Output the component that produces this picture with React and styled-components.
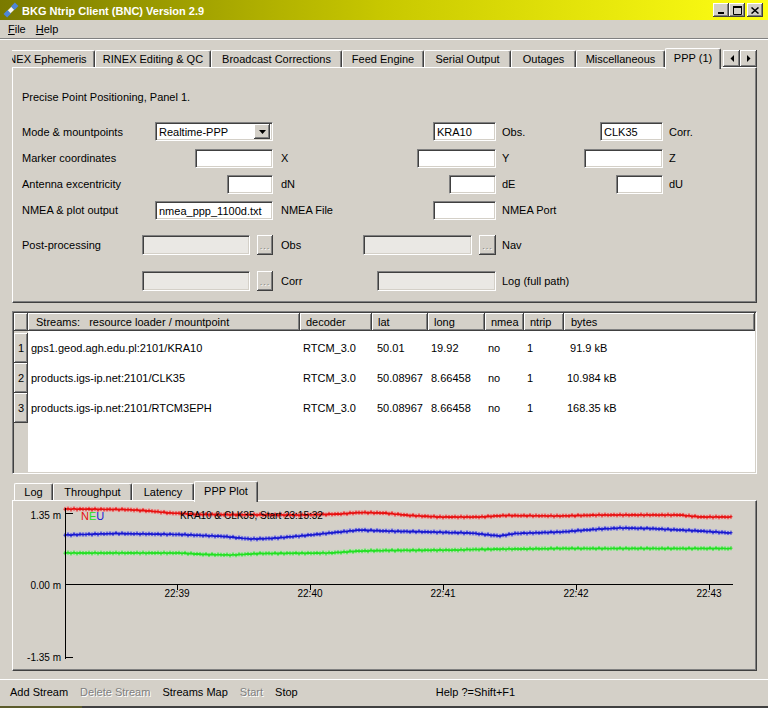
import React from 'react'
import styled, { createGlobalStyle } from 'styled-components'

const GlobalStyle = createGlobalStyle`
  html, body {
    margin: 0;
    padding: 0;
    background: #d4d0c8;
  }
  body {
    font-family: 'Liberation Sans', Arial, sans-serif;
    font-size: 11px;
    color: #000;
  }
`

const raised = `
  box-shadow: inset -1px -1px #404040, inset 1px 1px #fff, inset -2px -2px #808080;
`

const Window = styled.div`
  width: 768px;
  height: 708px;
  background: #d4d0c8;
  display: flex;
  flex-direction: column;
  overflow: hidden;
`

const TitleBar = styled.div`
  height: 20px;
  flex: none;
  display: flex;
  align-items: center;
  padding: 0 5px 0 3px;
  background: linear-gradient(to right, #7a7a00, #c8c800 50%, #ffff14);
  color: #fff;
  font-weight: bold;
  font-size: 11px;
  gap: 3px;
`

const TitleText = styled.span`
  flex: 1;
  padding-top: 1px;
`

const WinButtons = styled.div`
  display: flex;
  align-items: center;
`

const WinButton = styled.div`
  width: 16px;
  height: 14px;
  background: #d4d0c8;
  ${raised}
  display: flex;
  align-items: center;
  justify-content: center;
  margin-left: ${({ $gap }) => $gap || 0}px;
`

const MenuBar = styled.div`
  height: 18px;
  flex: none;
  display: flex;
  align-items: center;
  padding-left: 3px;
`

const MenuItem = styled.span`
  padding: 0 5px;
  u {
    text-decoration: underline;
  }
`

const Separator = styled.div`
  height: 0;
  flex: none;
  border-top: 1px solid #808080;
  border-bottom: 1px solid #fff;
`

const Content = styled.div`
  flex: none;
  display: flex;
  flex-direction: column;
  padding: 8px 11px 0 12px;
`

const TabBar = styled.div`
  height: 21px;
  display: flex;
  align-items: flex-end;
  position: relative;
  z-index: 2;
`

const TabStrip = styled.div`
  width: ${({ $w }) => $w}px;
  height: 21px;
  display: flex;
  align-items: flex-end;
  overflow: hidden;
`

const Tab = styled.div`
  flex: none;
  box-sizing: border-box;
  width: ${({ $w }) => $w}px;
  height: ${({ $active }) => ($active ? 21 : 17)}px;
  margin-bottom: ${({ $active }) => ($active ? 0 : 2)}px;
  margin-left: ${({ $offset }) => $offset || 0}px;
  padding-bottom: ${({ $active }) => ($active ? 3 : 0)}px;
  display: flex;
  align-items: center;
  justify-content: center;
  white-space: nowrap;
  background: #d4d0c8;
  border-top: 1px solid #fff;
  border-left: 1px solid #fff;
  border-right: 1px solid #404040;
  border-radius: 2px 2px 0 0;
  box-shadow: inset -1px 0 #808080;
  position: relative;
  z-index: ${({ $active }) => ($active ? 2 : 1)};
`

const ArrowPair = styled.div`
  display: flex;
  margin: 0 0 2px 1px;
`

const ArrowButton = styled.div`
  width: 17px;
  height: 17px;
  box-sizing: border-box;
  background: #d4d0c8;
  ${raised}
  display: flex;
  align-items: center;
  justify-content: center;
`

const Pane = styled.div`
  box-sizing: border-box;
  height: ${({ $h }) => $h}px;
  margin-top: -2px;
  border-top: 1px solid #fff;
  border-left: 1px solid #fff;
  border-right: 1px solid #404040;
  border-bottom: 1px solid #404040;
  box-shadow: inset -1px -1px #808080;
  position: relative;
  z-index: 1;
`

const PanelBody = styled.div`
  padding: 23px 0 0 9px;
`

const Heading = styled.div`
  height: 13px;
  line-height: 13px;
  margin-bottom: 14px;
`

const FormGrid = styled.div`
  display: grid;
  grid-template-columns: 120px 131px 90px 133px 88px 79px 1fr;
  grid-template-rows: 27px 26px 26px 26px 44px 28px;
  align-items: center;
`

const Label = styled.span`
  grid-column: ${({ $col }) => $col};
  padding-left: ${({ $pad }) => $pad || 0}px;
  white-space: nowrap;
`

const Cell = styled.div`
  grid-column: ${({ $col }) => $col};
  justify-self: end;
  display: flex;
  align-items: center;
  gap: 7px;
`

const Field = styled.div`
  box-sizing: border-box;
  width: ${({ $w }) => $w}px;
  height: ${({ $h }) => $h || 19}px;
  background: ${({ $disabled }) => ($disabled ? '#eae8e4' : '#fff')};
  border-top: 1px solid #808080;
  border-left: 1px solid #808080;
  border-bottom: 1px solid #fff;
  border-right: 1px solid #fff;
  box-shadow: inset 1px 1px #404040, inset -1px -1px #d4d0c8;
  padding: 1px 3px 0;
  display: flex;
  align-items: center;
  white-space: nowrap;
  overflow: hidden;
`

const ComboBox = styled(Field)`
  justify-content: space-between;
  padding: 0 2px 0 3px;
`

const DropButton = styled.div`
  width: 16px;
  height: 15px;
  box-sizing: border-box;
  background: #d4d0c8;
  ${raised}
  display: flex;
  align-items: center;
  justify-content: center;
`

const DotsButton = styled.div`
  width: ${({ $w }) => $w || 16}px;
  height: 20px;
  box-sizing: border-box;
  background: #d4d0c8;
  ${raised}
  color: #808080;
  text-shadow: 1px 1px #fff;
  display: flex;
  align-items: flex-end;
  justify-content: center;
  padding-bottom: 4px;
  font-size: 9px;
  letter-spacing: 1px;
`

const Table = styled.div`
  box-sizing: border-box;
  height: 163px;
  margin-top: 8px;
  border-top: 1px solid #808080;
  border-left: 1px solid #808080;
  border-bottom: 1px solid #fff;
  border-right: 1px solid #fff;
  box-shadow: inset 1px 1px #404040, inset -1px -1px #d4d0c8;
  padding: 1px;
  display: flex;
  flex-direction: column;
`

const columns = '14px 272px 72px 56px 57px 39px 40px 1fr'

const HeaderRow = styled.div`
  display: grid;
  grid-template-columns: ${columns};
  height: 18px;
  flex: none;
`

const HeaderCell = styled.div`
  box-sizing: border-box;
  background: #d4d0c8;
  ${raised}
  padding-left: ${({ $pad }) => $pad ?? 6}px;
  display: flex;
  align-items: center;
  white-space: pre;
`

const TableBody = styled.div`
  flex: 1;
  padding-top: 2px;
  background: linear-gradient(to right, #d4d0c8 14px, #fff 14px);
`

const Row = styled.div`
  display: grid;
  grid-template-columns: ${columns};
  height: 30px;
`

const RowHead = styled(HeaderCell)`
  padding-left: 4px;
`

const DataCell = styled.div`
  background: #fff;
  padding-left: ${({ $pad }) => $pad ?? 3}px;
  display: flex;
  align-items: center;
  white-space: pre;
`

const BottomTabBar = styled(TabBar)`
  margin-top: 7px;
  padding-left: 2px;
`

const PlotSvg = styled.svg`
  display: block;
  position: absolute;
  left: 1px;
  top: 1px;
  font-family: 'Liberation Sans', Arial, sans-serif;
`

const ActionBar = styled.div`
  flex: none;
  margin-top: 8px;
  border-top: 1px solid #fff;
  height: 24px;
  display: flex;
  align-items: center;
  padding: 0 0 0 10px;
  gap: 12px;
`

const Action = styled.span`
  color: ${({ $disabled }) => ($disabled ? '#808080' : '#000')};
  text-shadow: ${({ $disabled }) => ($disabled ? '1px 1px #fff' : 'none')};
  white-space: nowrap;
`

const HelpHint = styled.span`
  margin-left: 126px;
`

const BottomEdge = styled.div`
  height: 2px;
  flex: none;
  margin-top: auto;
  background: linear-gradient(to right, #5c5c2c 82px, #404040 82px);
`

const AppIcon = () => (
  <svg width="16" height="16" viewBox="0 0 16 16">
    <g transform="rotate(-45 8 8)">
      <rect x="0" y="5.5" width="5.5" height="5" fill="#4f86d8" />
      <rect x="5.5" y="6" width="5" height="4" fill="#f4f4f4" />
      <rect x="10.5" y="5.5" width="5.5" height="5" fill="#4f86d8" />
    </g>
  </svg>
)

const Triangle = ({ dir }) => {
  const d = {
    down: 'M0 0h7l-3.5 4z',
    left: 'M4 0v7L0.5 3.5z',
    right: 'M0 0v7l3.5-3.5z',
  }[dir]
  const size = dir === 'down' ? [7, 4] : [4, 7]
  return (
    <svg width={size[0]} height={size[1]} viewBox={`0 0 ${size[0]} ${size[1]}`}>
      <path d={d} fill="#000" />
    </svg>
  )
}

const topTabs = [
  { label: 'RINEX Ephemeris', w: 106, offset: -23 },
  { label: 'RINEX Editing & QC', w: 116 },
  { label: 'Broadcast Corrections', w: 131 },
  { label: 'Feed Engine', w: 82 },
  { label: 'Serial Output', w: 87 },
  { label: 'Outages', w: 65 },
  { label: 'Miscellaneous', w: 89 },
  { label: 'PPP (1)', w: 56, active: true },
]

const bottomTabs = [
  { label: 'Log', w: 39 },
  { label: 'Throughput', w: 79 },
  { label: 'Latency', w: 62 },
  { label: 'PPP Plot', w: 64, active: true },
]

const streams = [
  ['gps1.geod.agh.edu.pl:2101/KRA10', 'RTCM_3.0', '50.01', '19.92', 'no', '1', ' 91.9 kB'],
  ['products.igs-ip.net:2101/CLK35', 'RTCM_3.0', '50.08967', '8.66458', 'no', '1', '10.984 kB'],
  ['products.igs-ip.net:2101/RTCM3EPH', 'RTCM_3.0', '50.08967', '8.66458', 'no', '1', '168.35 kB'],
]

const headers = [
  ['Streams:   resource loader / mountpoint', 8],
  ['decoder', 6],
  ['lat', 6],
  ['long', 6],
  ['nmea', 6],
  ['ntrip', 6],
  ['bytes', 7],
]

// control points for the three coordinate traces, page coordinates
const traces = [
  {
    color: '#e81010',
    halo: '#f6a0a0',
    pts: [[65, 509], [125, 509.5], [150, 511], [170, 513], [200, 514.5], [300, 515], [340, 514], [360, 512.5], [384, 513], [410, 515.5], [440, 517], [480, 517], [505, 515.5], [560, 516], [600, 515], [680, 515], [700, 517], [731, 517]],
  },
  {
    color: '#1818d0',
    halo: '#a8a8f0',
    pts: [[65, 535], [115, 533.5], [180, 534.5], [225, 536.5], [250, 539], [270, 538.5], [300, 536], [330, 533], [360, 530], [384, 531], [430, 532], [470, 533], [490, 535], [500, 536], [515, 533.5], [560, 532], [600, 529], [620, 528], [650, 528.5], [700, 531], [731, 533]],
  },
  {
    color: '#22e022',
    halo: '#a8f0a8',
    pts: [[65, 553], [180, 553], [205, 554.5], [232, 555], [260, 553.5], [330, 553], [360, 551], [384, 550.5], [460, 550], [470, 549.5], [560, 548.5], [731, 548.5]],
  },
]

const interp = (pts, x) => {
  for (let i = 0; i < pts.length - 1; i++) {
    const [x0, y0] = pts[i]
    const [x1, y1] = pts[i + 1]
    if (x >= x0 && x <= x1) return y0 + ((y1 - y0) * (x - x0)) / (x1 - x0)
  }
  return pts[pts.length - 1][1]
}

const sample = (pts) => {
  const out = []
  for (let x = 65; x <= 731; x += 3) {
    out.push([x, interp(pts, x) + Math.sin(x * 0.91) * 0.45])
  }
  return out
}

const timeTicks = [
  [177, '22:39'],
  [310, '22:40'],
  [443, '22:41'],
  [576, '22:42'],
  [709, '22:43'],
]

const Plot = () => (
  <PlotSvg width="741" height="167" viewBox="14 502 741 167">
    {traces.map((t, i) => {
      const pts = sample(t.pts)
      const line = pts.map(([x, y]) => `${x},${y.toFixed(1)}`).join(' ')
      const marks = pts.map(([x, y]) => `M${x} ${(y - 2).toFixed(1)}v4M${x - 1.5} ${y.toFixed(1)}h3`).join('')
      return (
        <g key={i}>
          <polyline points={line} fill="none" stroke={t.halo} strokeWidth="5" opacity="0.45" />
          <polyline points={line} fill="none" stroke={t.color} strokeWidth="1.6" />
          <path d={marks} stroke={t.color} strokeWidth="1" fill="none" />
        </g>
      )
    })}
    <line x1="65.5" y1="508" x2="65.5" y2="659" stroke="#000" />
    <line x1="65" y1="513.5" x2="73" y2="513.5" stroke="#000" />
    <line x1="65" y1="657.5" x2="73" y2="657.5" stroke="#000" />
    <line x1="65" y1="584.5" x2="733" y2="584.5" stroke="#000" />
    <text x="61" y="519" fontSize="10" textAnchor="end">1.35 m</text>
    <text x="61" y="589" fontSize="10" textAnchor="end">0.00 m</text>
    <text x="61" y="661" fontSize="10" textAnchor="end">-1.35 m</text>
    {timeTicks.map(([x, label]) => (
      <g key={label}>
        <line x1={x + 0.5} y1="585" x2={x + 0.5} y2="590" stroke="#000" />
        <text x={x} y="597" fontSize="10" textAnchor="middle">{label}</text>
      </g>
    ))}
    <text x="81" y="520" fontSize="11">
      <tspan fill="#e81010">N</tspan>
      <tspan fill="#22e022">E</tspan>
      <tspan fill="#1818d0">U</tspan>
    </text>
    <text x="180" y="519" fontSize="10">KRA10 &amp; CLK35, Start 23:15:32</text>
  </PlotSvg>
)

const App = () => (
  <Window>
    <GlobalStyle />
    <TitleBar>
      <AppIcon />
      <TitleText>BKG Ntrip Client (BNC) Version 2.9</TitleText>
      <WinButtons>
        <WinButton>
          <svg width="8" height="7" viewBox="0 0 8 7"><rect x="1" y="5" width="6" height="2" fill="#000" /></svg>
        </WinButton>
        <WinButton>
          <svg width="9" height="9" viewBox="0 0 9 9"><path d="M0.5 1.5h8v7h-8z" fill="none" stroke="#000" /><rect x="0" y="0" width="9" height="2" fill="#000" /></svg>
        </WinButton>
        <WinButton $gap={2}>
          <svg width="8" height="7" viewBox="0 0 8 7"><path d="M0.5 0.5l7 6M7.5 0.5l-7 6" stroke="#000" strokeWidth="1.5" /></svg>
        </WinButton>
      </WinButtons>
    </TitleBar>
    <MenuBar>
      <MenuItem><u>F</u>ile</MenuItem>
      <MenuItem><u>H</u>elp</MenuItem>
    </MenuBar>
    <Separator />
    <Content>
      <TabBar>
        <TabStrip $w={710}>
          {topTabs.map((t) => (
            <Tab key={t.label} $w={t.w} $offset={t.offset} $active={t.active}>{t.label}</Tab>
          ))}
        </TabStrip>
        <ArrowPair>
          <ArrowButton><Triangle dir="left" /></ArrowButton>
          <ArrowButton><Triangle dir="right" /></ArrowButton>
        </ArrowPair>
      </TabBar>
      <Pane $h={236}>
        <PanelBody>
          <Heading>Precise Point Positioning, Panel 1.</Heading>
          <FormGrid>
            <Label $col={1}>Mode &amp; mountpoints</Label>
            <Cell $col={2}>
              <ComboBox $w={118}>
                Realtime-PPP
                <DropButton><Triangle dir="down" /></DropButton>
              </ComboBox>
            </Cell>
            <Cell $col={4}><Field $w={63}>KRA10</Field></Cell>
            <Label $col={5} $pad={6}>Obs.</Label>
            <Cell $col={6}><Field $w={63}>CLK35</Field></Cell>
            <Label $col={7} $pad={6}>Corr.</Label>

            <Label $col={1}>Marker coordinates</Label>
            <Cell $col={2}><Field $w={78} /></Cell>
            <Label $col={3} $pad={8}>X</Label>
            <Cell $col={4}><Field $w={79} /></Cell>
            <Label $col={5} $pad={6}>Y</Label>
            <Cell $col={6}><Field $w={79} /></Cell>
            <Label $col={7} $pad={6}>Z</Label>

            <Label $col={1}>Antenna excentricity</Label>
            <Cell $col={2}><Field $w={46} /></Cell>
            <Label $col={3} $pad={8}>dN</Label>
            <Cell $col={4}><Field $w={47} /></Cell>
            <Label $col={5} $pad={6}>dE</Label>
            <Cell $col={6}><Field $w={47} /></Cell>
            <Label $col={7} $pad={6}>dU</Label>

            <Label $col={1}>NMEA &amp; plot output</Label>
            <Cell $col={2}><Field $w={118}>nmea_ppp_1100d.txt</Field></Cell>
            <Label $col={3} $pad={8}>NMEA File</Label>
            <Cell $col={4}><Field $w={63} /></Cell>
            <Label $col={5} $pad={6}>NMEA Port</Label>

            <Label $col={1}>Post-processing</Label>
            <Cell $col={2}>
              <Field $w={108} $h={20} $disabled />
              <DotsButton>...</DotsButton>
            </Cell>
            <Label $col={3} $pad={8}>Obs</Label>
            <Cell $col={4}>
              <Field $w={109} $h={20} $disabled />
              <DotsButton $w={17}>...</DotsButton>
            </Cell>
            <Label $col={5} $pad={6}>Nav</Label>

            <Cell $col={2}>
              <Field $w={108} $h={20} $disabled />
              <DotsButton>...</DotsButton>
            </Cell>
            <Label $col={3} $pad={8}>Corr</Label>
            <Cell $col={4}><Field $w={119} $h={20} $disabled /></Cell>
            <Label $col={5} $pad={6}>Log (full path)</Label>
          </FormGrid>
        </PanelBody>
      </Pane>

      <Table>
        <HeaderRow>
          <HeaderCell $pad={0} />
          {headers.map(([h, pad]) => (
            <HeaderCell key={h} $pad={pad}>{h}</HeaderCell>
          ))}
        </HeaderRow>
        <TableBody>
          {streams.map((r, i) => (
            <Row key={r[0]}>
              <RowHead>{i + 1}</RowHead>
              {r.map((v, j) => (
                <DataCell key={j} $pad={j === 2 ? 5 : 3}>{v}</DataCell>
              ))}
            </Row>
          ))}
        </TableBody>
      </Table>

      <BottomTabBar>
        {bottomTabs.map((t) => (
          <Tab key={t.label} $w={t.w} $active={t.active}>{t.label}</Tab>
        ))}
      </BottomTabBar>
      <Pane $h={171}>
        <Plot />
      </Pane>
    </Content>
    <ActionBar>
      <Action>Add Stream</Action>
      <Action $disabled>Delete Stream</Action>
      <Action>Streams Map</Action>
      <Action $disabled>Start</Action>
      <Action>Stop</Action>
      <HelpHint>Help ?=Shift+F1</HelpHint>
    </ActionBar>
    <BottomEdge />
  </Window>
)

export default App
